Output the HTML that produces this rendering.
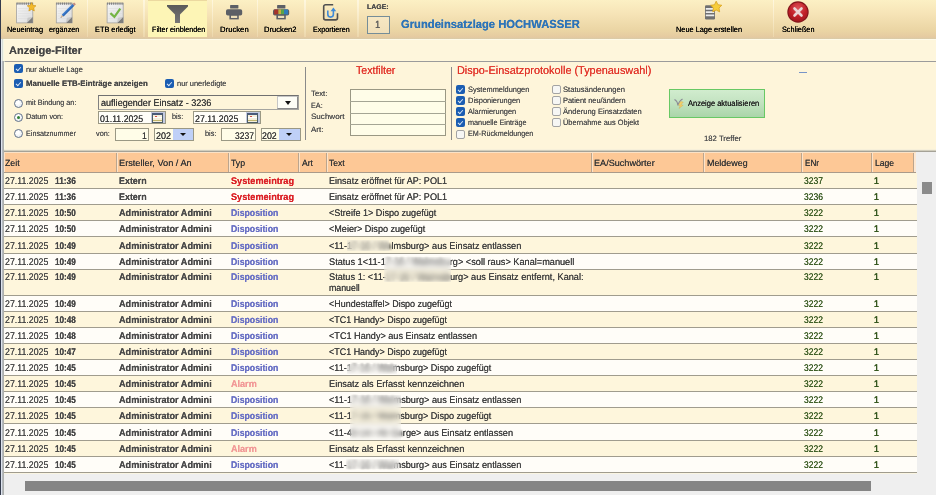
<!DOCTYPE html>
<html lang="de">
<head>
<meta charset="utf-8">
<title>ETB Anzeige-Filter</title>
<style>
*{box-sizing:border-box;margin:0;padding:0}
html,body{width:936px;height:495px;overflow:hidden}
body{position:relative;background:#fef6dc;font-family:"Liberation Sans",sans-serif;font-size:9px;color:#333;-webkit-font-smoothing:antialiased}
.abs{position:absolute}
/* left window edge */
#edge1{left:0;top:0;width:1px;height:495px;background:#343b4c}
#edge2{left:1px;top:61px;width:3px;height:434px;background:linear-gradient(90deg,#dde3ee 0,#dde3ee 33.3%,#b5b9bd 33.4%,#b5b9bd 66.6%,#adb0ae 66.7%)}
#edge3{left:1px;top:39px;width:3px;height:22px;background:linear-gradient(90deg,#e9eef0 0,#e9eef0 33.3%,#d9ddd6 33.4%,#d9ddd6 66.6%,#f3f6e4 66.7%)}
/* toolbar */
#tb{left:0;top:0;width:936px;height:38.6px;background:linear-gradient(180deg,#fcf0c4 0%,#f6e4b7 35%,#ead4a3 80%,#e5caa0 95%,#d8cba9 100%)}
#tbh{left:1px;top:38.6px;width:935px;height:1.6px;background:#fffbe8}
.tbl{position:absolute;top:24.5px;font-size:8.4px;color:#1a1a1a;white-space:nowrap;letter-spacing:-0.1px}
.sep{position:absolute;top:0;width:1.5px;height:37px;background:linear-gradient(180deg,rgba(255,248,225,.9),rgba(240,222,180,.6))}
#hl{left:148px;top:0;width:59px;height:37px;background:#fdf5b6;border-top:1px solid #ecd9a0}
svg{position:absolute;overflow:visible}
/* filter panel */
#ttl{left:8px;top:41.5px;font-size:13px;font-weight:bold;color:#3a3a3a;letter-spacing:-0.1px}
#pnl{left:3.6px;top:60.8px;width:933px;height:88.7px;background:#fef5da;border-top:1.2px solid #9b9b9b;border-left:1px solid #fbfde8}
#pband{left:4px;top:149px;width:932px;height:3px;background:linear-gradient(180deg,#f7f0da 0,#f7f0da 33%,#d2cebd 34%,#d2cebd 66%,#a5a297 67%)}
.lb{position:absolute;font-size:8.3px;color:#444;white-space:nowrap}
.cb{position:absolute;width:9px;height:9px;border-radius:2px;background:#1b5db2}
.cb:after{content:"";position:absolute;left:3.3px;top:1.9px;width:2px;height:3.7px;border:solid #dfeaf8;border-width:0 1px 1px 0;transform:rotate(42deg)}
.cbe{position:absolute;width:9px;height:9px;border-radius:2px;background:#f6f6f4;border:1px solid #a3a3a3}
.rd{position:absolute;width:9px;height:9px;border-radius:50%;background:radial-gradient(circle at 40% 35%,#fff 20%,#dde4ec 100%);border:1px solid #62728a}
.rd.on:after{content:"";position:absolute;left:2px;top:2px;width:3px;height:3px;border-radius:50%;background:#2f7f35}
.inp{position:absolute;background:#fffde8;border:1px solid #9a9884;font-size:10.5px;color:#222;white-space:nowrap;overflow:hidden}
.vl{position:absolute;width:1px;background:#8a8a8a}
.red{position:absolute;color:#e02b20;font-size:12.5px;white-space:nowrap}
/* table */
#hdr{left:4px;top:152px;width:912px;height:21px;background:#fdc896;border-top:1px solid #fbe2c6;border-bottom:1px solid #a99a8a}
.h{position:absolute;top:0;height:19px;border-left:1px solid #fde3c8;border-right:1px solid #bba58e}
.r{position:absolute;left:4px;width:912.5px}
.ln{position:absolute;left:4px;width:912.5px;height:1px;background:#a09c8e}
.r.a{background:#fef6dc}
.r.b{background:#fffdf8}
.c{position:absolute;top:0;line-height:16.4px;white-space:nowrap}
.c1{left:1.5px}.c2{left:114.5px}.c3{left:226.5px}.c5{left:324.5px;line-height:10.6px;padding-top:3.1px}.c8{left:799.5px;color:#2e6a1c}.c9{left:869.5px;color:#2e6a1c}
.sys{color:#d8131b}.dis{color:#5761bf}.alm{color:#f08f8c}
.bl{filter:blur(1.1px)}
.bo{position:absolute;backdrop-filter:blur(2.6px);-webkit-backdrop-filter:blur(2.6px);background:rgba(255,255,255,.18)}
#vsb{left:915.5px;top:152px;width:20.5px;height:343px;background:#efefef}
#vth{left:922.2px;top:182.2px;width:10.2px;height:12.3px;background:#8b8b8b}
#hsb{left:4px;top:472.5px;width:932px;height:22.5px;background:#efefef}
#hth{left:25px;top:480.7px;width:845.5px;height:10.4px;background:#858585}
.t{position:absolute;white-space:nowrap;line-height:1;transform-origin:0 0;display:block;text-rendering:geometricPrecision;text-shadow:0 0 .55px currentColor}
#tx{position:absolute;left:0;top:0;width:936px;height:495px;will-change:transform}
.mk{display:inline-block;width:0;height:0}
</style>
</head>
<body>
<div id="tb" class="abs">
  <div id="hl" class="abs"></div>
  <div class="sep" style="left:86.500px"></div>
  <div class="sep" style="left:143.300px"></div>
  <div class="sep" style="left:211.800px"></div>
  <div class="sep" style="left:256.600px"></div>
  <div class="sep" style="left:304.400px"></div>
  <div class="sep" style="left:357px"></div>
  <div class="sep" style="left:772.800px"></div>

  <!-- Neueintrag: notepad + star -->
  <svg style="left:15px;top:1.500px" width="22" height="22" viewBox="0 0 22 22">
    <defs><linearGradient id="pg" x1="0" y1="0" x2="1" y2="1"><stop offset="0" stop-color="#f6f6f6"/><stop offset="1" stop-color="#dcdcdc"/></linearGradient></defs>
    <rect x="1.6" y="1.200" width="16.2" height="19.700" fill="url(#pg)" stroke="#a2a2a2" stroke-width=".8"/>
    <path d="M3.1 6.500h13.2M3.1 9h13.2M3.1 11.500h13.2M3.1 14h13.2M3.1 16.500h11.2" stroke="#dadada" stroke-width=".5"/>
    <path d="M11.6 20.900L17.8 14.700V20.900z" fill="#7d7d7d"/>
    <path d="M11.6 20.900L17.8 14.700L12.6 15.700z" fill="#c9c9c9"/>
    <path d="M1.6 1.700h16.2" stroke="#808080" stroke-width="2.200" stroke-dasharray="1.100 .8"/>
    <path transform="translate(16.600 4.900) scale(.88) translate(-16 -4.700)" d="M16 -.3l1.500 3.200 3.500.5-2.600 2.400.7 3.500-3.100-1.700-3.100 1.700.7-3.500-2.600-2.400 3.500-.5z" fill="#f3b92b" stroke="#d29612" stroke-width=".7"/>
  </svg>
  <!-- ergänzen: notepad + pencil -->
  <svg style="left:54.500px;top:1.500px" width="22" height="22" viewBox="0 0 22 22">
    <rect x="1.3" y="1.200" width="15.8" height="19.700" fill="url(#pg)" stroke="#a2a2a2" stroke-width=".8"/>
    <path d="M2.8 6.500h12.8M2.8 9h12.8M2.8 11.500h12.8M2.8 14h12.8M2.8 16.500h10.8" stroke="#dadada" stroke-width=".5"/>
    <path d="M10.9 20.900L17.1 14.700V20.900z" fill="#7d7d7d"/>
    <path d="M10.9 20.900L17.1 14.700L11.9 15.700z" fill="#c9c9c9"/>
    <path d="M1.3 1.700h15.8" stroke="#808080" stroke-width="2.200" stroke-dasharray="1.100 .8"/>
    <g transform="translate(5.600 15.800) rotate(-45)">
      <path d="M0 0l3-1.250v2.500z" fill="#d9b690"/>
      <path d="M0 0l1.100-.45v.9z" fill="#555"/>
      <rect x="3" y="-1.250" width="15.200" height="2.500" fill="#2b68b8"/>
      <rect x="3" y="-1.250" width="15.200" height=".9" fill="#4a86d2"/>
      <rect x="18.200" y="-1.250" width="2.200" height="2.500" fill="#c08a80"/>
    </g>
  </svg>
  <!-- ETB erledigt: notepad + check -->
  <svg style="left:105.500px;top:1.500px" width="20" height="22" viewBox="0 0 20 22">
    <rect x="1.1" y="1.200" width="16.1" height="19.700" fill="url(#pg)" stroke="#a2a2a2" stroke-width=".8"/>
    <path d="M2.6 6.500h13.1M2.6 9h13.1M2.6 11.500h13.1M2.6 14h13.1M2.6 16.500h11.1" stroke="#dadada" stroke-width=".5"/>
    <path d="M11.0 20.900L17.2 14.700V20.900z" fill="#7d7d7d"/>
    <path d="M11.0 20.900L17.2 14.700L12.0 15.700z" fill="#c9c9c9"/>
    <path d="M1.1 1.700h16.1" stroke="#808080" stroke-width="2.200" stroke-dasharray="1.100 .8"/>
    <path d="M4.400 11.100l4 3.700 5.900-8.100" fill="none" stroke="#74b544" stroke-width="2.200"/>
  </svg>
  <!-- Filter -->
  <svg style="left:167.300px;top:4.800px" width="21" height="18" viewBox="0 0 21 18">
    <defs><linearGradient id="fg" x1="0" y1="0" x2="0" y2="1"><stop offset="0" stop-color="#5a5a5a"/><stop offset="1" stop-color="#767676"/></linearGradient></defs>
    <path d="M0 0h21v1.400l-8 8v8.700h-5v-8.700l-8-8z" fill="url(#fg)"/>
  </svg>
  <!-- Drucken -->
  <svg style="left:226px;top:5.300px" width="16.200" height="14.400" viewBox="0 0 16.200 14.400">
    <rect x="4.100" y="0" width="8.300" height="3.500" rx=".6" fill="#5c5f66"/>
    <rect x="0" y="4.200" width="16.200" height="6.400" rx="1.800" fill="#5c5f66"/>
    <rect x="3.400" y="9.300" width="9.400" height="5.100" fill="#5c5f66"/>
    <rect x="5" y="10.800" width="6.200" height="2.200" fill="#eedfb8"/>
  </svg>
  <!-- Drucken2 -->
  <svg style="left:273px;top:5.300px" width="16.200" height="14.400" viewBox="0 0 16.200 14.400">
    <rect x="4.100" y="0" width="8.300" height="3.500" rx=".6" fill="#5c5f66"/>
    <rect x="0" y="4.200" width="16.200" height="6.400" rx="1.800" fill="#5c5f66"/>
    <rect x="1.200" y="4.500" width="4.200" height="5" fill="#a5332b"/>
    <rect x="5.400" y="4.500" width="2.700" height="5" fill="#c8b03c"/>
    <rect x="8.100" y="4.500" width="2.900" height="5" fill="#5aa548"/>
    <rect x="11" y="4.500" width="4" height="5" fill="#2f7cb8"/>
    <rect x="3.400" y="9.300" width="9.400" height="5.100" fill="#5c5f66"/>
    <rect x="5" y="10.800" width="6.200" height="2.200" fill="#eedfb8"/>
  </svg>
  <!-- Exportieren -->
  <svg style="left:322.800px;top:4.200px" width="15.200" height="16.600" viewBox="0 0 15.200 16.600">
    <path d="M10.200 .7H2.600a1.900 1.900 0 0 0-1.900 1.900V14a1.900 1.900 0 0 0 1.900 1.900h10a1.900 1.900 0 0 0 1.900-1.900V9.200" fill="none" stroke="#505050" stroke-width="1.600"/>
    <path d="M4.800 6.600v3.700a2.800 2.800 0 0 0 5.600 0V6.800" fill="none" stroke="#3f8ad8" stroke-width="1.600"/>
    <path d="M7.600 7.200l2.800-3.600 2.800 3.600z" fill="#3f8ad8"/>
  </svg>
  <!-- LAGE box -->
  <div class="abs" style="left:367px;top:16px;width:23px;height:17.500px;border:1.200px solid #758d98;background:rgba(250,240,215,.45)"></div>
  <!-- Neue Lage erstellen -->
  <svg style="left:703.500px;top:0" width="19" height="21" viewBox="0 0 19 21">
    <rect x="1" y="5.200" width="10" height="14.300" rx="1.200" fill="#707070"/>
    <path d="M1.800 8.900h8.400M1.800 12.100h8.400M1.800 15.300h8.400" stroke="#ececec" stroke-width="1.800"/>
    <path transform="translate(12.200 7) scale(1.080) translate(-12.600 -5.200)" d="M12.600 -.2l1.600 3.300 3.600.5-2.600 2.500.6 3.600-3.200-1.700-3.200 1.700.6-3.600-2.600-2.500 3.600-.5z" fill="#f7cd3a" stroke="#d9a018" stroke-width=".7"/>
  </svg>
  <!-- Schließen -->
  <svg style="left:787.400px;top:1px" width="22" height="22" viewBox="0 0 22 22">
    <defs><radialGradient id="rg" cx=".5" cy=".3" r=".8"><stop offset="0" stop-color="#dd5258"/><stop offset=".55" stop-color="#c01e27"/><stop offset="1" stop-color="#96141b"/></radialGradient></defs>
    <circle cx="11" cy="11" r="10.700" fill="#84161c"/>
    <circle cx="11" cy="11" r="9.600" fill="url(#rg)"/>
    <path d="M7.500 7.500l7 7M14.500 7.500l-7 7" stroke="#ecd4d4" stroke-width="2.600" stroke-linecap="round"/>
  </svg>
</div>
<div id="tbh" class="abs"></div>
<div id="edge1" class="abs"></div>
<div id="edge2" class="abs"></div>
<div id="edge3" class="abs"></div>
<div id="pnl" class="abs"></div>
<div id="pband" class="abs"></div>

<!-- left filter block -->
<div class="cb" style="left:14px;top:64px"></div>
<div class="cb" style="left:14px;top:79px"></div>
<div class="cb" style="left:165px;top:79px"></div>
<div class="rd" style="left:14px;top:99px"></div>
<div class="rd on" style="left:14px;top:113px"></div>
<div class="rd" style="left:14px;top:129.400px"></div>

<div class="inp" style="left:98.200px;top:94.800px;width:200.600px;height:15px;background:#fef5da;border:1px solid #a5a5a0;border-top:1.800px solid #707070;border-left:1.300px solid #808080">
  <div class="abs" style="right:0;top:0;width:21px;height:13px;background:#fdfdf6;border:1px solid #c6c6c6;border-right:1.500px solid #8a8a8a;border-bottom:1.500px solid #8a8a8a"></div>
  <div class="abs" style="right:6.500px;top:4.800px;border:3.850px solid transparent;border-top:4.200px solid #111;border-bottom:0"></div>
</div>
<div class="inp" style="left:98.200px;top:111.300px;width:67.700px;height:13px;background:#fffef8">
  <div class="abs" style="right:0;top:0;width:14px;height:11px;background:#c3cae0"></div>
  <div class="abs" style="right:1.600px;top:.8px;width:10.800px;height:9.600px;background:#f6f0dc;border:.8px solid #4d5d66;border-top:2.200px solid #4a5a7a"></div>
  <div class="abs" style="right:7.500px;top:4.200px;width:2.500px;height:2px;background:#d0524a"></div>
  <div class="abs" style="right:2.600px;top:4.800px;width:8.800px;height:.8px;background:#fff"></div>
  <div class="abs" style="right:2.600px;top:7.600px;width:8.800px;height:1.600px;background:#c2b66c"></div>
</div>
<div class="inp" style="left:193.300px;top:111.300px;width:67.500px;height:13px;background:#fffef8">
  <div class="abs" style="right:0;top:0;width:14px;height:11px;background:#c3cae0"></div>
  <div class="abs" style="right:1.600px;top:.8px;width:10.800px;height:9.600px;background:#f6f0dc;border:.8px solid #4d5d66;border-top:2.200px solid #4a5a7a"></div>
  <div class="abs" style="right:7.500px;top:4.200px;width:2.500px;height:2px;background:#d0524a"></div>
  <div class="abs" style="right:2.600px;top:4.800px;width:8.800px;height:.8px;background:#fff"></div>
  <div class="abs" style="right:2.600px;top:7.600px;width:8.800px;height:1.600px;background:#c2b66c"></div>
</div>
<div class="inp" style="left:115px;top:128.200px;width:34.200px;height:12.800px"></div>
<div class="inp" style="left:154px;top:128.200px;width:39.800px;height:12.800px">
  <div class="abs" style="right:0;top:0;width:20px;height:11px;background:#bfd0f7"></div>
  <div class="abs" style="right:7.200px;top:4.200px;border:3.200px solid transparent;border-top:3px solid #111;border-bottom:0"></div>
</div>
<div class="inp" style="left:221.300px;top:128.200px;width:34.400px;height:12.800px"></div>
<div class="inp" style="left:260.500px;top:128.200px;width:40.200px;height:12.800px">
  <div class="abs" style="right:0;top:0;width:21px;height:11px;background:#bfd0f7"></div>
  <div class="abs" style="right:7.800px;top:4.200px;border:3.200px solid transparent;border-top:3px solid #111;border-bottom:0"></div>
</div>

<div class="vl" style="left:305px;top:66.900px;height:72.700px"></div>
<div class="inp" style="left:350.400px;top:89.100px;width:95.600px;height:46.600px"></div>
<div class="abs" style="left:350.400px;top:101px;width:95.600px;height:1px;background:#a5a594"></div>
<div class="abs" style="left:350.400px;top:112.600px;width:95.600px;height:1px;background:#a5a594"></div>
<div class="abs" style="left:350.400px;top:123.700px;width:95.600px;height:1px;background:#a5a594"></div>
<div class="vl" style="left:451px;top:66.900px;height:72.700px"></div>

<div class="cb" style="left:456px;top:85px"></div>
<div class="cb" style="left:456px;top:96px"></div>
<div class="cb" style="left:456px;top:107px"></div>
<div class="cb" style="left:456px;top:118px"></div>
<div class="cbe" style="left:456px;top:129.600px"></div>
<div class="cbe" style="left:552px;top:85px"></div>
<div class="cbe" style="left:552px;top:96px"></div>
<div class="cbe" style="left:552px;top:107px"></div>
<div class="cbe" style="left:552px;top:118px"></div>

<div class="abs" style="left:669px;top:89px;width:96.300px;height:28.900px;background:linear-gradient(180deg,#d1ecce,#c3e3c1 45%,#aad5a9);border:1px solid #68c864"></div>
<svg style="left:674px;top:98px" width="10.500" height="11" viewBox="0 0 10.500 11">
  <path d="M.5 1.500c2 1 3.200 3 3.400 6M4 7.500c.3-2.500 1.500-4.500 4.500-6.500" fill="none" stroke="#8a8a96" stroke-width="1.100"/>
  <path d="M6.500 3.500l2.800.5-2.300 2.800 2.200.4-4.200 3.300 1.200-2.900-1.800-.3z" fill="#f2cf6a" stroke="#c9a040" stroke-width=".3"/>
</svg>
<div class="abs" style="left:798.500px;top:72.200px;width:8px;height:1.300px;background:#7794c8"></div>

<!-- table -->
<div id="hdr" class="abs">
  <div class="h" style="left:0px;width:113px"></div>
  <div class="h" style="left:113px;width:112px"></div>
  <div class="h" style="left:225px;width:70px"></div>
  <div class="h" style="left:295px;width:28px"></div>
  <div class="h" style="left:323px;width:265px"></div>
  <div class="h" style="left:588px;width:112px"></div>
  <div class="h" style="left:700px;width:98px"></div>
  <div class="h" style="left:798px;width:70px"></div>
  <div class="h" style="left:868px;width:42px"></div>
  <div class="abs" style="left:910px;top:0;width:2px;height:19px;background:#fde8d2"></div>
</div>
<div id="vsb" class="abs"></div>
<div id="hsb" class="abs"></div>
<div class="abs" style="left:4px;top:473px;width:912.500px;height:1px;background:#faf5e2"></div>
<div class="r a" style="top:173.00px;height:16.00px"></div>
<div class="ln" style="top:188px"></div>
<div class="r b" style="top:189.00px;height:16.00px"></div>
<div class="ln" style="top:204px"></div>
<div class="r a" style="top:205.00px;height:16.00px"></div>
<div class="ln" style="top:220px"></div>
<div class="r b" style="top:221.00px;height:16.00px"></div>
<div class="ln" style="top:236px"></div>
<div class="r a" style="top:237.00px;height:17.00px"></div>
<div class="ln" style="top:253px"></div>
<div class="r b" style="top:254.00px;height:16.00px"></div>
<div class="ln" style="top:269px"></div>
<div class="r a" style="top:270.00px;height:26.00px"></div>
<div class="ln" style="top:295px"></div>
<div class="r b" style="top:296.00px;height:16.00px"></div>
<div class="ln" style="top:311px"></div>
<div class="r a" style="top:312.00px;height:16.00px"></div>
<div class="ln" style="top:327px"></div>
<div class="r b" style="top:328.00px;height:16.00px"></div>
<div class="ln" style="top:343px"></div>
<div class="r a" style="top:344.00px;height:16.00px"></div>
<div class="ln" style="top:359px"></div>
<div class="r b" style="top:360.00px;height:16.00px"></div>
<div class="ln" style="top:375px"></div>
<div class="r a" style="top:376.00px;height:16.00px"></div>
<div class="ln" style="top:391px"></div>
<div class="r b" style="top:392.00px;height:16.00px"></div>
<div class="ln" style="top:407px"></div>
<div class="r a" style="top:408.00px;height:16.00px"></div>
<div class="ln" style="top:423px"></div>
<div class="r b" style="top:424.00px;height:17.00px"></div>
<div class="ln" style="top:440px"></div>
<div class="r a" style="top:441.00px;height:16.00px"></div>
<div class="ln" style="top:456px"></div>
<div class="r b" style="top:457.00px;height:16.00px"></div>
<div class="ln" style="top:472px"></div>
<div id="vth" class="abs"></div>
<div id="hth" class="abs"></div>
<div id="tx"><span class=t id=t0 style="left:7.00px;top:26.00px;font-size:7.80px;color:#000;transform:scaleX(0.9435);text-shadow:0 0 .25px currentColor;">Neueintrag</span>
<span class=t id=t1 style="left:48.80px;top:26.00px;font-size:7.80px;color:#000;transform:scaleX(0.9349);text-shadow:0 0 .25px currentColor;">ergänzen</span>
<span class=t id=t2 style="left:94.80px;top:26.00px;font-size:7.80px;color:#000;transform:scaleX(0.9439);text-shadow:0 0 .25px currentColor;">ETB erledigt</span>
<span class=t id=t3 style="left:151.80px;top:26.00px;font-size:7.80px;color:#000;transform:scaleX(0.9244);text-shadow:0 0 .25px currentColor;">Filter einblenden</span>
<span class=t id=t4 style="left:220.00px;top:26.00px;font-size:7.80px;color:#000;transform:scaleX(0.9881);text-shadow:0 0 .25px currentColor;">Drucken</span>
<span class=t id=t5 style="left:264.30px;top:26.00px;font-size:7.80px;color:#000;transform:scaleX(0.9768);text-shadow:0 0 .25px currentColor;">Drucken2</span>
<span class=t id=t6 style="left:312.70px;top:26.00px;font-size:7.80px;color:#000;transform:scaleX(0.9204);text-shadow:0 0 .25px currentColor;">Exportieren</span>
<span class=t id=t7 style="left:675.90px;top:25.60px;font-size:7.80px;color:#000;transform:scaleX(0.9456);text-shadow:0 0 .25px currentColor;">Neue Lage erstellen</span>
<span class=t id=t8 style="left:782.10px;top:25.60px;font-size:7.80px;color:#000;transform:scaleX(0.9374);text-shadow:0 0 .25px currentColor;">Schließen</span>
<span class=t id=t9 style="left:367.30px;top:4.90px;font-size:6.80px;color:#4c4c4c;font-weight:bold;transform:scaleX(1.0257);">LAGE:</span>
<span class=t id=t10 style="left:375.20px;top:20.80px;font-size:10.40px;color:#5c5c5c;transform:scaleX(0.9200);">1</span>
<span class=t id=t11 style="left:401.00px;top:18.70px;font-size:11.70px;color:#2d74b8;font-weight:bold;transform:scaleX(0.9593);text-shadow:0 0 .2px currentColor;">Grundeinsatzlage HOCHWASSER</span>
<span class=t id=t12 style="left:8.60px;top:46.00px;font-size:11.00px;color:#464646;font-weight:bold;transform:scaleX(1.0037);">Anzeige-Filter</span>
<span class=t id=t13 style="left:25.60px;top:65.60px;font-size:7.80px;color:#525252;transform:scaleX(0.9494);">nur aktuelle Lage</span>
<span class=t id=t14 style="left:25.60px;top:80.40px;font-size:8.00px;color:#484848;font-weight:bold;transform:scaleX(0.9848);">Manuelle ETB-Einträge anzeigen</span>
<span class=t id=t15 style="left:176.90px;top:79.90px;font-size:7.80px;color:#525252;transform:scaleX(0.9514);">nur unerledigte</span>
<span class=t id=t16 style="left:25.60px;top:98.90px;font-size:7.80px;color:#525252;transform:scaleX(0.9301);">mit Bindung an:</span>
<span class=t id=t17 style="left:25.60px;top:113.00px;font-size:7.80px;color:#525252;transform:scaleX(0.9304);">Datum von:</span>
<span class=t id=t18 style="left:25.60px;top:129.60px;font-size:7.80px;color:#525252;transform:scaleX(0.9230);">Einsatznummer</span>
<span class=t id=t19 style="left:95.80px;top:129.60px;font-size:7.80px;color:#525252;transform:scaleX(0.9356);">von:</span>
<span class=t id=t20 style="left:171.50px;top:112.60px;font-size:7.80px;color:#525252;transform:scaleX(0.9225);">bis:</span>
<span class=t id=t21 style="left:204.90px;top:129.60px;font-size:7.80px;color:#525252;transform:scaleX(0.9472);">bis:</span>
<span class=t id=t22 style="left:100.50px;top:98.60px;font-size:9.80px;color:#3a3a3a;transform:scaleX(0.9255);text-shadow:0 0 .3px currentColor;">aufliegender Einsatz - 3236</span>
<span class=t id=t23 style="left:99.60px;top:114.80px;font-size:9.60px;color:#3a3a3a;transform:scaleX(0.9110);text-shadow:0 0 .3px currentColor;">01.11.2025</span>
<span class=t id=t24 style="left:195.10px;top:114.80px;font-size:9.60px;color:#3a3a3a;transform:scaleX(0.9173);text-shadow:0 0 .3px currentColor;">27.11.2025</span>
<span class=t id=t25 style="left:142.30px;top:131.50px;font-size:9.60px;color:#3a3a3a;transform:scaleX(0.9000);text-shadow:0 0 .3px currentColor;">1</span>
<span class=t id=t26 style="left:155.50px;top:131.50px;font-size:9.60px;color:#3a3a3a;transform:scaleX(0.9303);text-shadow:0 0 .3px currentColor;">202</span>
<span class=t id=t27 style="left:235.10px;top:131.50px;font-size:9.60px;color:#3a3a3a;transform:scaleX(0.8855);text-shadow:0 0 .3px currentColor;">3237</span>
<span class=t id=t28 style="left:262.00px;top:131.50px;font-size:9.60px;color:#3a3a3a;transform:scaleX(0.9179);text-shadow:0 0 .3px currentColor;">202</span>
<span class=t id=t29 style="left:356.40px;top:65.60px;font-size:11.30px;color:#e2352b;transform:scaleX(0.9367);text-shadow:0 0 .3px currentColor;">Textfilter</span>
<span class=t id=t30 style="left:456.90px;top:65.60px;font-size:11.30px;color:#e2352b;transform:scaleX(0.9645);text-shadow:0 0 .3px currentColor;">Dispo-Einsatzprotokolle (Typenauswahl)</span>
<span class=t id=t31 style="left:310.90px;top:90.40px;font-size:7.80px;color:#525252;transform:scaleX(0.9958);">Text:</span>
<span class=t id=t32 style="left:310.90px;top:101.60px;font-size:7.80px;color:#525252;transform:scaleX(0.9302);">EA:</span>
<span class=t id=t33 style="left:310.90px;top:112.70px;font-size:7.80px;color:#525252;transform:scaleX(1.0333);">Suchwort</span>
<span class=t id=t34 style="left:310.90px;top:125.80px;font-size:7.80px;color:#525252;transform:scaleX(1.0214);">Art:</span>
<span class=t id=t35 style="left:467.80px;top:85.50px;font-size:7.80px;color:#525252;transform:scaleX(0.9492);">Systemmeldungen</span>
<span class=t id=t36 style="left:467.80px;top:96.70px;font-size:7.80px;color:#525252;transform:scaleX(0.9556);">Disponierungen</span>
<span class=t id=t37 style="left:467.80px;top:107.80px;font-size:7.80px;color:#525252;transform:scaleX(0.9503);">Alarmierungen</span>
<span class=t id=t38 style="left:467.80px;top:119.10px;font-size:7.80px;color:#525252;transform:scaleX(0.9322);">manuelle Einträge</span>
<span class=t id=t39 style="left:467.80px;top:130.00px;font-size:7.80px;color:#525252;transform:scaleX(0.9244);">EM-Rückmeldungen</span>
<span class=t id=t40 style="left:563.10px;top:85.50px;font-size:7.80px;color:#525252;transform:scaleX(0.9728);">Statusänderungen</span>
<span class=t id=t41 style="left:563.10px;top:96.70px;font-size:7.80px;color:#525252;transform:scaleX(0.9514);">Patient neu/ändern</span>
<span class=t id=t42 style="left:563.10px;top:107.80px;font-size:7.80px;color:#525252;transform:scaleX(0.9709);">Änderung Einsatzdaten</span>
<span class=t id=t43 style="left:563.10px;top:119.10px;font-size:7.80px;color:#525252;transform:scaleX(0.9478);">Übernahme aus Objekt</span>
<span class=t id=t44 style="left:687.70px;top:99.50px;font-size:8.20px;color:#222;transform:scaleX(0.9159);">Anzeige aktualisieren</span>
<span class=t id=t45 style="left:703.60px;top:134.90px;font-size:7.80px;color:#525252;transform:scaleX(0.9926);">182 Treffer</span>
<span class=t id=t46 style="left:5.40px;top:158.60px;font-size:9.00px;color:#383838;transform:scaleX(0.9723);">Zeit</span>
<span class=t id=t47 style="left:119.00px;top:158.60px;font-size:9.00px;color:#383838;transform:scaleX(1.0233);">Ersteller, Von / An</span>
<span class=t id=t48 style="left:231.00px;top:158.60px;font-size:9.00px;color:#383838;transform:scaleX(0.9645);">Typ</span>
<span class=t id=t49 style="left:301.70px;top:158.60px;font-size:9.00px;color:#383838;transform:scaleX(0.9552);">Art</span>
<span class=t id=t50 style="left:329.30px;top:158.60px;font-size:9.00px;color:#383838;transform:scaleX(0.9506);">Text</span>
<span class=t id=t51 style="left:594.00px;top:158.60px;font-size:9.00px;color:#383838;transform:scaleX(1.0111);">EA/Suchwörter</span>
<span class=t id=t52 style="left:706.70px;top:158.60px;font-size:9.00px;color:#383838;transform:scaleX(0.9895);">Meldeweg</span>
<span class=t id=t53 style="left:804.50px;top:158.60px;font-size:9.00px;color:#383838;transform:scaleX(0.9032);">ENr</span>
<span class=t id=t54 style="left:874.50px;top:158.60px;font-size:9.00px;color:#383838;transform:scaleX(0.9535);">Lage</span>
<span class=t id=t55 style="left:5.20px;top:177.00px;font-size:9.70px;color:#484848;transform:scaleX(0.9065);">27.11.2025</span>
<span class=t id=t56 style="left:55.40px;top:177.00px;font-size:9.70px;color:#484848;font-weight:bold;transform:scaleX(0.8619);">11:36</span>
<span class=t id=t57 style="left:119.00px;top:177.00px;font-size:9.70px;color:#4a4a4a;font-weight:bold;transform:scaleX(0.9185);">Extern</span>
<span class=t id=t58 style="left:231.00px;top:177.00px;font-size:9.70px;color:#dc2228;font-weight:bold;transform:scaleX(0.9436);">Systemeintrag</span>
<span class=t id=t59 style="left:328.70px;top:177.00px;font-size:9.70px;color:#404040;transform:scaleX(0.9337);">Einsatz eröffnet für AP: POL1</span>
<span class=t id=t60 style="left:804.20px;top:177.00px;font-size:9.70px;color:#36581f;transform:scaleX(0.8765);">3237</span>
<span class=t id=t61 style="left:873.70px;top:177.00px;font-size:9.70px;color:#36581f;font-weight:bold;transform:scaleX(0.8800);">1</span>
<span class=t id=t62 style="left:5.20px;top:193.00px;font-size:9.70px;color:#484848;transform:scaleX(0.9065);">27.11.2025</span>
<span class=t id=t63 style="left:55.40px;top:193.00px;font-size:9.70px;color:#484848;font-weight:bold;transform:scaleX(0.8619);">11:36</span>
<span class=t id=t64 style="left:119.00px;top:193.00px;font-size:9.70px;color:#4a4a4a;font-weight:bold;transform:scaleX(0.9185);">Extern</span>
<span class=t id=t65 style="left:231.00px;top:193.00px;font-size:9.70px;color:#dc2228;font-weight:bold;transform:scaleX(0.9436);">Systemeintrag</span>
<span class=t id=t66 style="left:328.70px;top:193.00px;font-size:9.70px;color:#404040;transform:scaleX(0.9337);">Einsatz eröffnet für AP: POL1</span>
<span class=t id=t67 style="left:804.20px;top:193.00px;font-size:9.70px;color:#36581f;transform:scaleX(0.8765);">3236</span>
<span class=t id=t68 style="left:873.70px;top:193.00px;font-size:9.70px;color:#36581f;font-weight:bold;transform:scaleX(0.8800);">1</span>
<span class=t id=t69 style="left:5.20px;top:209.00px;font-size:9.70px;color:#484848;transform:scaleX(0.9065);">27.11.2025</span>
<span class=t id=t70 style="left:55.40px;top:209.00px;font-size:9.70px;color:#484848;font-weight:bold;transform:scaleX(0.8434);">10:50</span>
<span class=t id=t71 style="left:119.00px;top:209.00px;font-size:9.70px;color:#4a4a4a;font-weight:bold;transform:scaleX(0.9393);">Administrator Admini</span>
<span class=t id=t72 style="left:231.00px;top:209.00px;font-size:9.70px;color:#6b72c5;font-weight:bold;transform:scaleX(0.8967);">Disposition</span>
<span class=t id=t73 style="left:328.70px;top:209.00px;font-size:9.70px;color:#404040;transform:scaleX(0.9353);">&lt;Streife 1&gt; Dispo zugefügt</span>
<span class=t id=t74 style="left:804.20px;top:209.00px;font-size:9.70px;color:#36581f;transform:scaleX(0.8765);">3222</span>
<span class=t id=t75 style="left:873.70px;top:209.00px;font-size:9.70px;color:#36581f;font-weight:bold;transform:scaleX(0.8800);">1</span>
<span class=t id=t76 style="left:5.20px;top:225.00px;font-size:9.70px;color:#484848;transform:scaleX(0.9065);">27.11.2025</span>
<span class=t id=t77 style="left:55.40px;top:225.00px;font-size:9.70px;color:#484848;font-weight:bold;transform:scaleX(0.8434);">10:50</span>
<span class=t id=t78 style="left:119.00px;top:225.00px;font-size:9.70px;color:#4a4a4a;font-weight:bold;transform:scaleX(0.9393);">Administrator Admini</span>
<span class=t id=t79 style="left:231.00px;top:225.00px;font-size:9.70px;color:#6b72c5;font-weight:bold;transform:scaleX(0.8967);">Disposition</span>
<span class=t id=t80 style="left:328.70px;top:225.00px;font-size:9.70px;color:#404040;transform:scaleX(0.9362);">&lt;Meier&gt; Dispo zugefügt</span>
<span class=t id=t81 style="left:804.20px;top:225.00px;font-size:9.70px;color:#36581f;transform:scaleX(0.8765);">3222</span>
<span class=t id=t82 style="left:873.70px;top:225.00px;font-size:9.70px;color:#36581f;font-weight:bold;transform:scaleX(0.8800);">1</span>
<span class=t id=t83 style="left:5.20px;top:242.00px;font-size:9.70px;color:#484848;transform:scaleX(0.9065);">27.11.2025</span>
<span class=t id=t84 style="left:55.40px;top:242.00px;font-size:9.70px;color:#484848;font-weight:bold;transform:scaleX(0.8434);">10:49</span>
<span class=t id=t85 style="left:119.00px;top:242.00px;font-size:9.70px;color:#4a4a4a;font-weight:bold;transform:scaleX(0.9393);">Administrator Admini</span>
<span class=t id=t86 style="left:231.00px;top:242.00px;font-size:9.70px;color:#6b72c5;font-weight:bold;transform:scaleX(0.8967);">Disposition</span>
<span class=t id=t87 style="left:328.70px;top:242.00px;font-size:9.70px;color:#404040;transform:scaleX(0.9472);">&lt;11-1<span class=bl>7-16 / Wa</span>lmsburg&gt; aus Einsatz entlassen</span>
<span class=t id=t88 style="left:804.20px;top:242.00px;font-size:9.70px;color:#36581f;transform:scaleX(0.8765);">3222</span>
<span class=t id=t89 style="left:873.70px;top:242.00px;font-size:9.70px;color:#36581f;font-weight:bold;transform:scaleX(0.8800);">1</span>
<span class=t id=t90 style="left:5.20px;top:258.00px;font-size:9.70px;color:#484848;transform:scaleX(0.9065);">27.11.2025</span>
<span class=t id=t91 style="left:55.40px;top:258.00px;font-size:9.70px;color:#484848;font-weight:bold;transform:scaleX(0.8434);">10:49</span>
<span class=t id=t92 style="left:119.00px;top:258.00px;font-size:9.70px;color:#4a4a4a;font-weight:bold;transform:scaleX(0.9393);">Administrator Admini</span>
<span class=t id=t93 style="left:231.00px;top:258.00px;font-size:9.70px;color:#6b72c5;font-weight:bold;transform:scaleX(0.8967);">Disposition</span>
<span class=t id=t94 style="left:328.70px;top:258.00px;font-size:9.70px;color:#404040;transform:scaleX(0.9480);">Status 1&lt;11-1<span class=bl>7-16 / Walmsbu</span>rg&gt; &lt;soll raus&gt; Kanal=manuell</span>
<span class=t id=t95 style="left:804.20px;top:258.00px;font-size:9.70px;color:#36581f;transform:scaleX(0.8765);">3222</span>
<span class=t id=t96 style="left:873.70px;top:258.00px;font-size:9.70px;color:#36581f;font-weight:bold;transform:scaleX(0.8800);">1</span>
<span class=t id=t97 style="left:5.20px;top:273.00px;font-size:9.70px;color:#484848;transform:scaleX(0.9065);">27.11.2025</span>
<span class=t id=t98 style="left:55.40px;top:273.00px;font-size:9.70px;color:#484848;font-weight:bold;transform:scaleX(0.8434);">10:49</span>
<span class=t id=t99 style="left:119.00px;top:273.00px;font-size:9.70px;color:#4a4a4a;font-weight:bold;transform:scaleX(0.9393);">Administrator Admini</span>
<span class=t id=t100 style="left:231.00px;top:273.00px;font-size:9.70px;color:#6b72c5;font-weight:bold;transform:scaleX(0.8967);">Disposition</span>
<span class=t id=t101 style="left:328.70px;top:273.00px;font-size:9.70px;color:#404040;transform:scaleX(0.9493);">Status 1: &lt;11-<span class=bl>17-16 / Walmsb</span>urg&gt; aus Einsatz entfernt, Kanal:</span>
<span class=t id=t102 style="left:328.70px;top:284.00px;font-size:9.70px;color:#404040;transform:scaleX(0.9076);">manuell</span>
<span class=t id=t103 style="left:804.20px;top:273.00px;font-size:9.70px;color:#36581f;transform:scaleX(0.8765);">3222</span>
<span class=t id=t104 style="left:873.70px;top:273.00px;font-size:9.70px;color:#36581f;font-weight:bold;transform:scaleX(0.8800);">1</span>
<span class=t id=t105 style="left:5.20px;top:300.00px;font-size:9.70px;color:#484848;transform:scaleX(0.9065);">27.11.2025</span>
<span class=t id=t106 style="left:55.40px;top:300.00px;font-size:9.70px;color:#484848;font-weight:bold;transform:scaleX(0.8434);">10:49</span>
<span class=t id=t107 style="left:119.00px;top:300.00px;font-size:9.70px;color:#4a4a4a;font-weight:bold;transform:scaleX(0.9393);">Administrator Admini</span>
<span class=t id=t108 style="left:231.00px;top:300.00px;font-size:9.70px;color:#6b72c5;font-weight:bold;transform:scaleX(0.8967);">Disposition</span>
<span class=t id=t109 style="left:328.70px;top:300.00px;font-size:9.70px;color:#404040;transform:scaleX(0.9258);">&lt;Hundestaffel&gt; Dispo zugefügt</span>
<span class=t id=t110 style="left:804.20px;top:300.00px;font-size:9.70px;color:#36581f;transform:scaleX(0.8765);">3222</span>
<span class=t id=t111 style="left:873.70px;top:300.00px;font-size:9.70px;color:#36581f;font-weight:bold;transform:scaleX(0.8800);">1</span>
<span class=t id=t112 style="left:5.20px;top:316.00px;font-size:9.70px;color:#484848;transform:scaleX(0.9065);">27.11.2025</span>
<span class=t id=t113 style="left:55.40px;top:316.00px;font-size:9.70px;color:#484848;font-weight:bold;transform:scaleX(0.8434);">10:48</span>
<span class=t id=t114 style="left:119.00px;top:316.00px;font-size:9.70px;color:#4a4a4a;font-weight:bold;transform:scaleX(0.9393);">Administrator Admini</span>
<span class=t id=t115 style="left:231.00px;top:316.00px;font-size:9.70px;color:#6b72c5;font-weight:bold;transform:scaleX(0.8967);">Disposition</span>
<span class=t id=t116 style="left:328.70px;top:316.00px;font-size:9.70px;color:#404040;transform:scaleX(0.9245);">&lt;TC1 Handy&gt; Dispo zugefügt</span>
<span class=t id=t117 style="left:804.20px;top:316.00px;font-size:9.70px;color:#36581f;transform:scaleX(0.8765);">3222</span>
<span class=t id=t118 style="left:873.70px;top:316.00px;font-size:9.70px;color:#36581f;font-weight:bold;transform:scaleX(0.8800);">1</span>
<span class=t id=t119 style="left:5.20px;top:332.00px;font-size:9.70px;color:#484848;transform:scaleX(0.9065);">27.11.2025</span>
<span class=t id=t120 style="left:55.40px;top:332.00px;font-size:9.70px;color:#484848;font-weight:bold;transform:scaleX(0.8434);">10:48</span>
<span class=t id=t121 style="left:119.00px;top:332.00px;font-size:9.70px;color:#4a4a4a;font-weight:bold;transform:scaleX(0.9393);">Administrator Admini</span>
<span class=t id=t122 style="left:231.00px;top:332.00px;font-size:9.70px;color:#6b72c5;font-weight:bold;transform:scaleX(0.8967);">Disposition</span>
<span class=t id=t123 style="left:328.70px;top:332.00px;font-size:9.70px;color:#404040;transform:scaleX(0.9412);">&lt;TC1 Handy&gt; aus Einsatz entlassen</span>
<span class=t id=t124 style="left:804.20px;top:332.00px;font-size:9.70px;color:#36581f;transform:scaleX(0.8765);">3222</span>
<span class=t id=t125 style="left:873.70px;top:332.00px;font-size:9.70px;color:#36581f;font-weight:bold;transform:scaleX(0.8800);">1</span>
<span class=t id=t126 style="left:5.20px;top:348.00px;font-size:9.70px;color:#484848;transform:scaleX(0.9065);">27.11.2025</span>
<span class=t id=t127 style="left:55.40px;top:348.00px;font-size:9.70px;color:#484848;font-weight:bold;transform:scaleX(0.8434);">10:47</span>
<span class=t id=t128 style="left:119.00px;top:348.00px;font-size:9.70px;color:#4a4a4a;font-weight:bold;transform:scaleX(0.9393);">Administrator Admini</span>
<span class=t id=t129 style="left:231.00px;top:348.00px;font-size:9.70px;color:#6b72c5;font-weight:bold;transform:scaleX(0.8967);">Disposition</span>
<span class=t id=t130 style="left:328.70px;top:348.00px;font-size:9.70px;color:#404040;transform:scaleX(0.9245);">&lt;TC1 Handy&gt; Dispo zugefügt</span>
<span class=t id=t131 style="left:804.20px;top:348.00px;font-size:9.70px;color:#36581f;transform:scaleX(0.8765);">3222</span>
<span class=t id=t132 style="left:873.70px;top:348.00px;font-size:9.70px;color:#36581f;font-weight:bold;transform:scaleX(0.8800);">1</span>
<span class=t id=t133 style="left:5.20px;top:364.00px;font-size:9.70px;color:#484848;transform:scaleX(0.9065);">27.11.2025</span>
<span class=t id=t134 style="left:55.40px;top:364.00px;font-size:9.70px;color:#484848;font-weight:bold;transform:scaleX(0.8434);">10:45</span>
<span class=t id=t135 style="left:119.00px;top:364.00px;font-size:9.70px;color:#4a4a4a;font-weight:bold;transform:scaleX(0.9393);">Administrator Admini</span>
<span class=t id=t136 style="left:231.00px;top:364.00px;font-size:9.70px;color:#6b72c5;font-weight:bold;transform:scaleX(0.8967);">Disposition</span>
<span class=t id=t137 style="left:328.70px;top:364.00px;font-size:9.70px;color:#404040;transform:scaleX(0.9360);">&lt;11-1<span class=bl>7-16 / Wal</span>msburg&gt; Dispo zugefügt</span>
<span class=t id=t138 style="left:804.20px;top:364.00px;font-size:9.70px;color:#36581f;transform:scaleX(0.8765);">3222</span>
<span class=t id=t139 style="left:873.70px;top:364.00px;font-size:9.70px;color:#36581f;font-weight:bold;transform:scaleX(0.8800);">1</span>
<span class=t id=t140 style="left:5.20px;top:380.00px;font-size:9.70px;color:#484848;transform:scaleX(0.9065);">27.11.2025</span>
<span class=t id=t141 style="left:55.40px;top:380.00px;font-size:9.70px;color:#484848;font-weight:bold;transform:scaleX(0.8434);">10:45</span>
<span class=t id=t142 style="left:119.00px;top:380.00px;font-size:9.70px;color:#4a4a4a;font-weight:bold;transform:scaleX(0.9393);">Administrator Admini</span>
<span class=t id=t143 style="left:231.00px;top:380.00px;font-size:9.70px;color:#f29a98;font-weight:bold;transform:scaleX(0.9356);">Alarm</span>
<span class=t id=t144 style="left:328.70px;top:380.00px;font-size:9.70px;color:#404040;transform:scaleX(0.9517);">Einsatz als Erfasst kennzeichnen</span>
<span class=t id=t145 style="left:804.20px;top:380.00px;font-size:9.70px;color:#36581f;transform:scaleX(0.8765);">3222</span>
<span class=t id=t146 style="left:873.70px;top:380.00px;font-size:9.70px;color:#36581f;font-weight:bold;transform:scaleX(0.8800);">1</span>
<span class=t id=t147 style="left:5.20px;top:396.00px;font-size:9.70px;color:#484848;transform:scaleX(0.9065);">27.11.2025</span>
<span class=t id=t148 style="left:55.40px;top:396.00px;font-size:9.70px;color:#484848;font-weight:bold;transform:scaleX(0.8434);">10:45</span>
<span class=t id=t149 style="left:119.00px;top:396.00px;font-size:9.70px;color:#4a4a4a;font-weight:bold;transform:scaleX(0.9393);">Administrator Admini</span>
<span class=t id=t150 style="left:231.00px;top:396.00px;font-size:9.70px;color:#6b72c5;font-weight:bold;transform:scaleX(0.8967);">Disposition</span>
<span class=t id=t151 style="left:328.70px;top:396.00px;font-size:9.70px;color:#404040;transform:scaleX(0.9471);">&lt;11-1<span class=bl>7-16 / Wal</span>msburg&gt; aus Einsatz entlassen</span>
<span class=t id=t152 style="left:804.20px;top:396.00px;font-size:9.70px;color:#36581f;transform:scaleX(0.8765);">3222</span>
<span class=t id=t153 style="left:873.70px;top:396.00px;font-size:9.70px;color:#36581f;font-weight:bold;transform:scaleX(0.8800);">1</span>
<span class=t id=t154 style="left:5.20px;top:412.00px;font-size:9.70px;color:#484848;transform:scaleX(0.9065);">27.11.2025</span>
<span class=t id=t155 style="left:55.40px;top:412.00px;font-size:9.70px;color:#484848;font-weight:bold;transform:scaleX(0.8434);">10:45</span>
<span class=t id=t156 style="left:119.00px;top:412.00px;font-size:9.70px;color:#4a4a4a;font-weight:bold;transform:scaleX(0.9393);">Administrator Admini</span>
<span class=t id=t157 style="left:231.00px;top:412.00px;font-size:9.70px;color:#6b72c5;font-weight:bold;transform:scaleX(0.8967);">Disposition</span>
<span class=t id=t158 style="left:328.70px;top:412.00px;font-size:9.70px;color:#404040;transform:scaleX(0.9360);">&lt;11-1<span class=bl>7-16 / Wal</span>msburg&gt; Dispo zugefügt</span>
<span class=t id=t159 style="left:804.20px;top:412.00px;font-size:9.70px;color:#36581f;transform:scaleX(0.8765);">3222</span>
<span class=t id=t160 style="left:873.70px;top:412.00px;font-size:9.70px;color:#36581f;font-weight:bold;transform:scaleX(0.8800);">1</span>
<span class=t id=t161 style="left:5.20px;top:429.00px;font-size:9.70px;color:#484848;transform:scaleX(0.9065);">27.11.2025</span>
<span class=t id=t162 style="left:55.40px;top:429.00px;font-size:9.70px;color:#484848;font-weight:bold;transform:scaleX(0.8434);">10:45</span>
<span class=t id=t163 style="left:119.00px;top:429.00px;font-size:9.70px;color:#4a4a4a;font-weight:bold;transform:scaleX(0.9393);">Administrator Admini</span>
<span class=t id=t164 style="left:231.00px;top:429.00px;font-size:9.70px;color:#6b72c5;font-weight:bold;transform:scaleX(0.8967);">Disposition</span>
<span class=t id=t165 style="left:328.70px;top:429.00px;font-size:9.70px;color:#404040;transform:scaleX(0.9446);">&lt;11-4<span class=bl>3-14 / Alt Ga</span>rge&gt; aus Einsatz entlassen</span>
<span class=t id=t166 style="left:804.20px;top:429.00px;font-size:9.70px;color:#36581f;transform:scaleX(0.8765);">3222</span>
<span class=t id=t167 style="left:873.70px;top:429.00px;font-size:9.70px;color:#36581f;font-weight:bold;transform:scaleX(0.8800);">1</span>
<span class=t id=t168 style="left:5.20px;top:445.00px;font-size:9.70px;color:#484848;transform:scaleX(0.9065);">27.11.2025</span>
<span class=t id=t169 style="left:55.40px;top:445.00px;font-size:9.70px;color:#484848;font-weight:bold;transform:scaleX(0.8434);">10:45</span>
<span class=t id=t170 style="left:119.00px;top:445.00px;font-size:9.70px;color:#4a4a4a;font-weight:bold;transform:scaleX(0.9393);">Administrator Admini</span>
<span class=t id=t171 style="left:231.00px;top:445.00px;font-size:9.70px;color:#f29a98;font-weight:bold;transform:scaleX(0.9356);">Alarm</span>
<span class=t id=t172 style="left:328.70px;top:445.00px;font-size:9.70px;color:#404040;transform:scaleX(0.9517);">Einsatz als Erfasst kennzeichnen</span>
<span class=t id=t173 style="left:804.20px;top:445.00px;font-size:9.70px;color:#36581f;transform:scaleX(0.8765);">3222</span>
<span class=t id=t174 style="left:873.70px;top:445.00px;font-size:9.70px;color:#36581f;font-weight:bold;transform:scaleX(0.8800);">1</span>
<span class=t id=t175 style="left:5.20px;top:461.00px;font-size:9.70px;color:#484848;transform:scaleX(0.9065);">27.11.2025</span>
<span class=t id=t176 style="left:55.40px;top:461.00px;font-size:9.70px;color:#484848;font-weight:bold;transform:scaleX(0.8434);">10:45</span>
<span class=t id=t177 style="left:119.00px;top:461.00px;font-size:9.70px;color:#4a4a4a;font-weight:bold;transform:scaleX(0.9393);">Administrator Admini</span>
<span class=t id=t178 style="left:231.00px;top:461.00px;font-size:9.70px;color:#6b72c5;font-weight:bold;transform:scaleX(0.8967);">Disposition</span>
<span class=t id=t179 style="left:328.70px;top:461.00px;font-size:9.70px;color:#404040;transform:scaleX(0.9471);">&lt;11-<span class=bl>17-16 / Wal</span>msburg&gt; aus Einsatz entlassen</span>
<span class=t id=t180 style="left:804.20px;top:461.00px;font-size:9.70px;color:#36581f;transform:scaleX(0.8765);">3222</span>
<span class=t id=t181 style="left:873.70px;top:461.00px;font-size:9.70px;color:#36581f;font-weight:bold;transform:scaleX(0.8800);">1</span></div>
<div class="bo" style="left:347px;top:240px;width:42px;height:11px"></div>
<div class="bo" style="left:384px;top:256.500px;width:67px;height:25px"></div>
<div class="bo" style="left:346.500px;top:363.500px;width:50px;height:10px"></div>
<div class="bo" style="left:350px;top:395px;width:51px;height:45px"></div>
<div class="bo" style="left:346px;top:459px;width:52.500px;height:10px"></div>
</body>
</html>
